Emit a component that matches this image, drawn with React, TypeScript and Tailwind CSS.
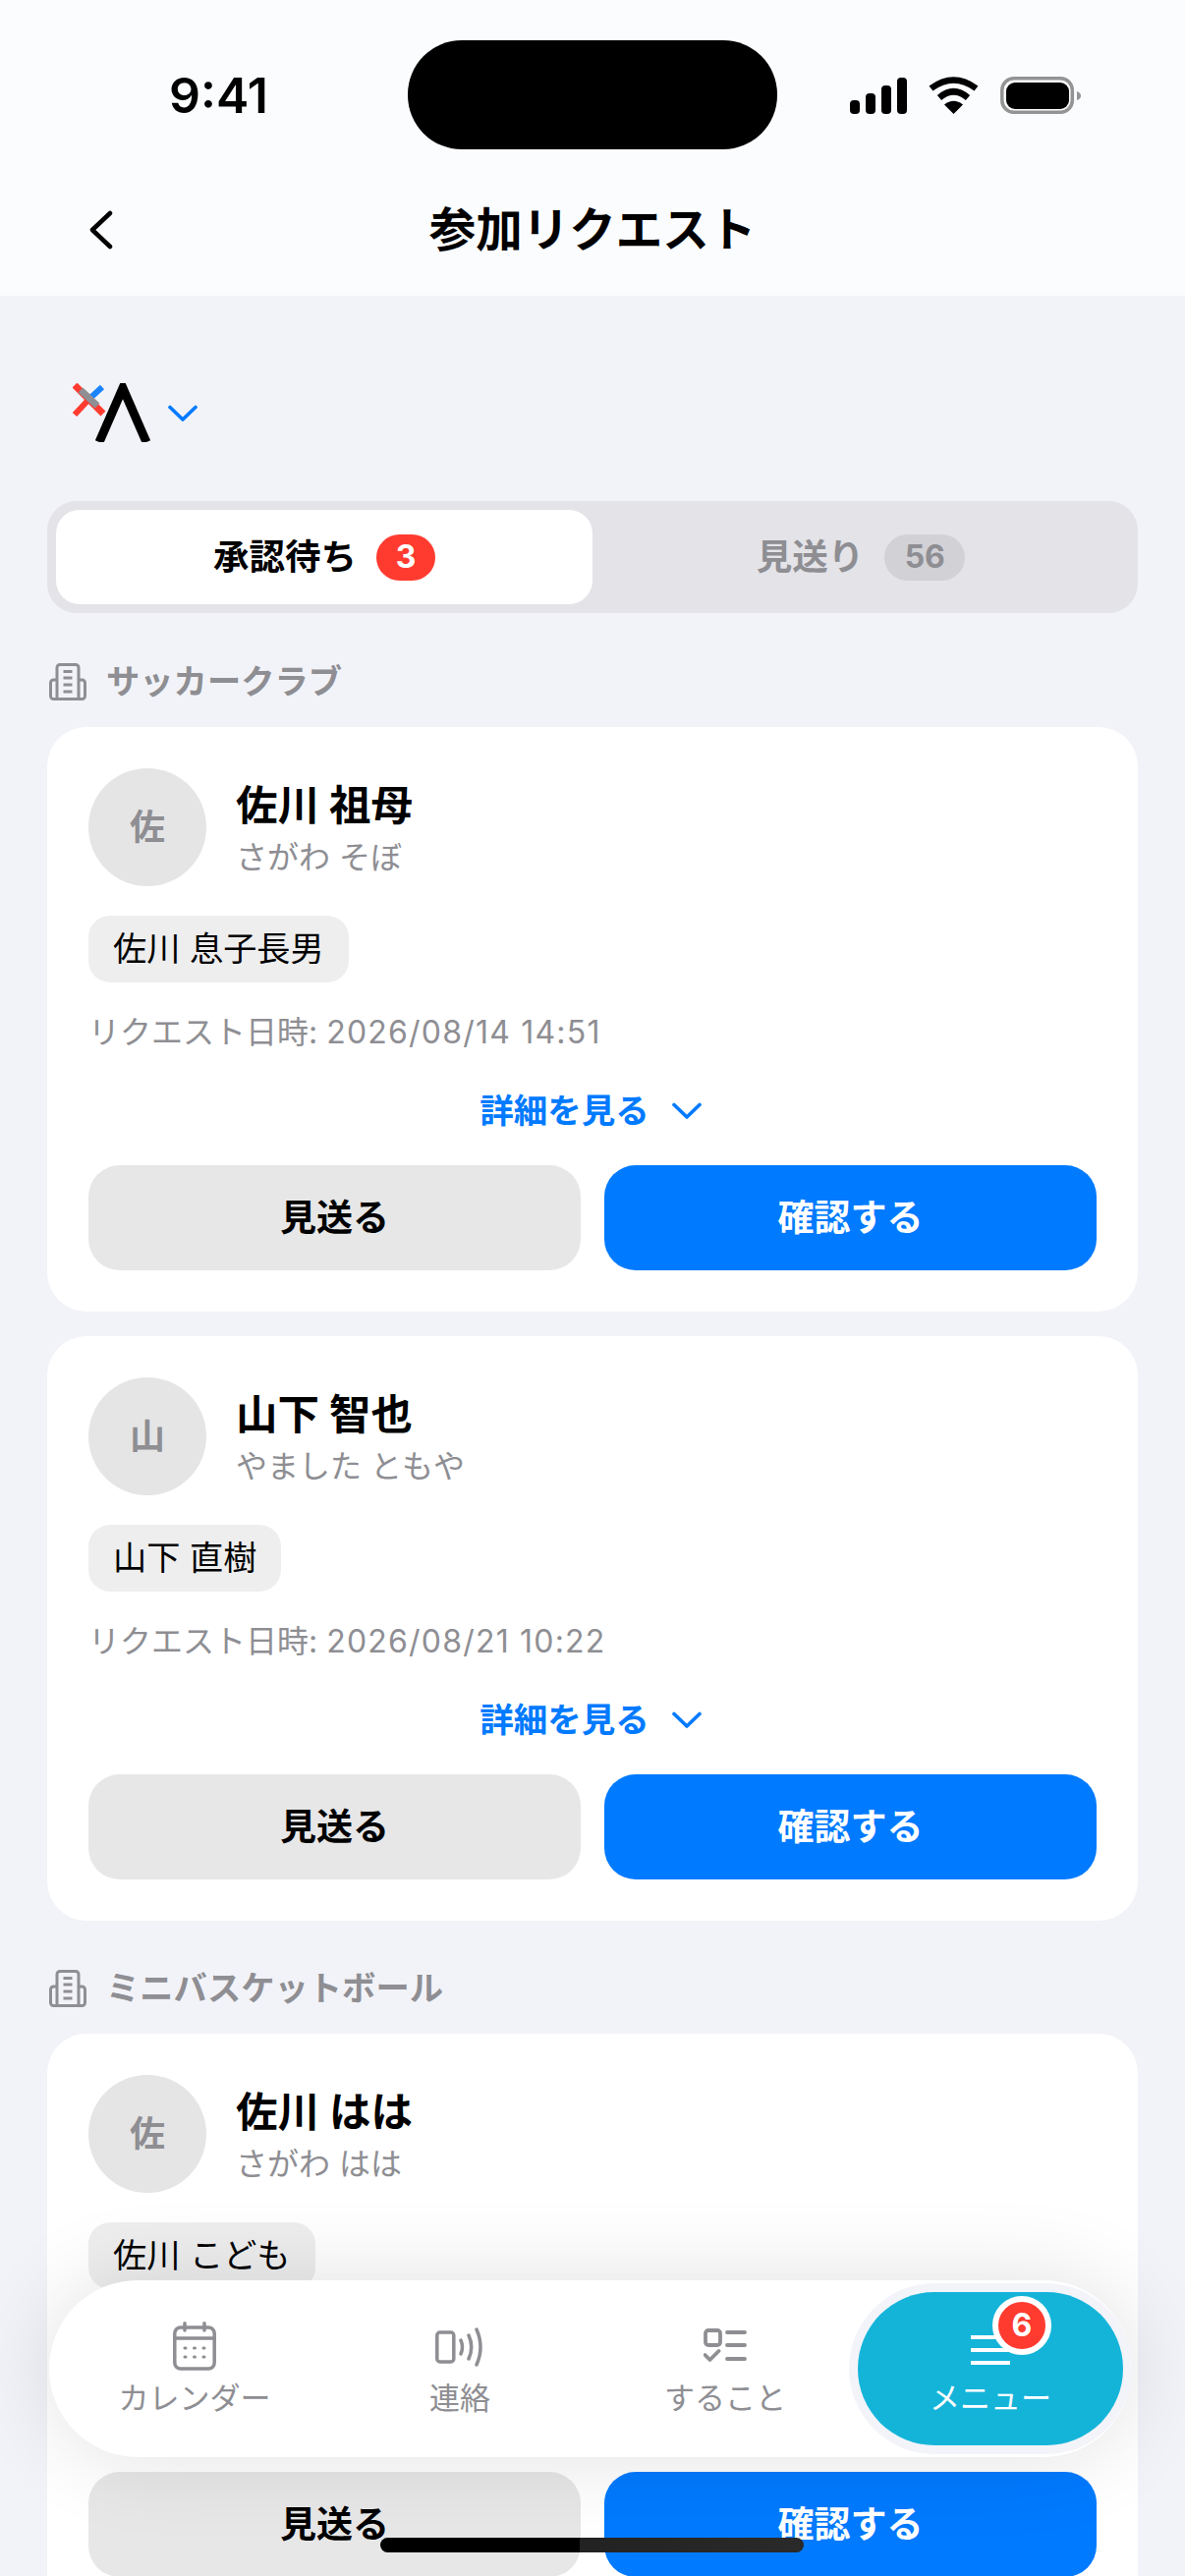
const FONT = "font-['Inter','Noto_Sans_CJK_JP',sans-serif]";

function Building() {
  return (
    <svg width="38" height="38" viewBox="0 0 38 38" fill="none" stroke="#8e8e93" strokeWidth="3" strokeLinejoin="round">
      <path d="M8 36.500V4.500a3 3 0 0 1 3-3h16a3 3 0 0 1 3 3v32" />
      <path d="M8 17H4.500a3 3 0 0 0-3 3v13.500a3 3 0 0 0 3 3h29a3 3 0 0 0 3-3V20a3 3 0 0 0-3-3H30" />
      <path d="M14.500 8.500h9M14.500 15h9M14.500 22h9M14.500 29h9" strokeWidth="3" />
    </svg>
  );
}

function Chevron({ cls = "" }: { cls?: string }) {
  return (
    <svg width="30" height="18" viewBox="0 0 30 18" fill="none" stroke="#007aff" strokeWidth="3.600" strokeLinecap="round" strokeLinejoin="round" className={cls}>
      <path d="M2 2.500 15 15 28 2.500" />
    </svg>
  );
}

function Card({ initial, name, kana, chip, date }: { initial: string; name: string; kana: string; chip: string; date: string }) {
  const [label, stamp] = date.split("|");
  return (
    <div className="bg-white rounded-[40px] p-[42px] h-[595px] shrink-0">
      <div className="flex items-start">
        <div className="w-[120px] h-[120px] rounded-full bg-[#e5e5e6] flex items-center justify-center text-[36px] font-bold text-[#8e8e93]">{initial}</div>
        <div className="ml-[30px] pt-[10px] flex flex-col">
          <div className="text-[42.500px] leading-[56px] font-bold text-black">{name}</div>
          <div className="text-[32px] leading-[44px] mt-[3px] text-[#8e8e93]">{kana}</div>
        </div>
      </div>
      <div className="mt-[30px] flex">
        <div className="h-[68px] px-[25px] rounded-[22px] bg-[#eeeeef] flex items-center text-[34.200px] text-black">{chip}</div>
      </div>
      <div className="mt-[31px] mb-[-1px] h-[40px] flex items-center text-[32px] text-[#8e8e93] whitespace-pre">
        <span>{label}</span>
        <span className="tracking-[1.200px]">{stamp}</span>
      </div>
      <div className="mt-[41px] h-[40px] flex items-center justify-center gap-[23px] text-[34.500px] font-bold text-[#007aff] -ml-[4px]">
        <span>詳細を見る</span>
        <Chevron />
      </div>
      <div className="mt-[35px] grid grid-cols-2 gap-[24px]">
        <div className="h-[107px] rounded-[32px] bg-[#e7e7e8] flex items-center justify-center text-[37px] font-bold text-black">見送る</div>
        <div className="h-[107px] rounded-[32px] bg-[#007aff] flex items-center justify-center text-[37px] font-bold text-white">確認する</div>
      </div>
    </div>
  );
}

function SectionHead({ label }: { label: string }) {
  return (
    <div className="h-[38px] flex items-center gap-[20px] mb-[27px] pl-[2px]">
      <Building />
      <span className="text-[34.300px] font-bold text-[#8e8e93]">{label}</span>
    </div>
  );
}

function TabItem({ label, icon }: { label: string; icon: React.ReactNode }) {
  return (
    <div className="w-[270px] h-[156px] shrink-0 flex flex-col items-center">
      <div className="h-[88px] flex items-end justify-center pb-[8px]">{icon}</div>
      <div className="text-[31px] leading-[40px] text-[#8e8e93] whitespace-nowrap">{label}</div>
    </div>
  );
}

export default function App() {
  return (
    <div className={`relative w-[1206px] h-[2622px] overflow-hidden bg-[#f2f3f8] ${FONT}`}>
      <header className="h-[301px] bg-[#fbfcfe]">
        <div className="h-[152px] pt-[41px] grid grid-cols-[1fr_376px_1fr]">
          <div className="pl-[172px] flex items-center text-[50px] leading-none font-semibold text-black">9:41</div>
          <div className="h-[111px] rounded-[55px] bg-black" />
          <div className="pr-[106px] flex items-center justify-end">
            <svg width="235" height="38" viewBox="0 0 235 38">
              <rect x="0" y="24" width="10" height="14" rx="4" />
              <rect x="16" y="17" width="10" height="21" rx="4" />
              <rect x="32" y="9" width="10" height="29" rx="4" />
              <rect x="48" y="1" width="10" height="37" rx="4" />
              <g transform="translate(80 1)">
                <path d="M2.500 11Q25.500 -6 48.500 11" fill="none" stroke="#000" strokeWidth="6.500" />
                <path d="M11 20.500Q25.500 8 40 20.500" fill="none" stroke="#000" strokeWidth="6.500" />
                <path d="M25.500 37 16 27.500Q25.500 20 35 27.500Z" />
              </g>
              <rect x="154.800" y="1.800" width="71.500" height="34.500" rx="12" fill="none" stroke="#949494" strokeWidth="3.500" />
              <rect x="159" y="6" width="64" height="27" rx="9" />
              <path d="M231 15v9q4-1.500 4-4.500t-4-4.500Z" fill="#949494" />
            </svg>
          </div>
        </div>
        <div className="h-[149px] pt-[15px] grid grid-cols-[1fr_auto_1fr] items-center">
          <div className="pl-[91px]">
            <svg width="24" height="40" viewBox="0 0 24 40" fill="none" stroke="#000" strokeWidth="4.500" strokeLinecap="round" strokeLinejoin="round">
              <path d="M21 3 3 20l18 17" />
            </svg>
          </div>
          <div className="text-[47.500px] leading-[60px] font-bold text-black">参加リクエスト</div>
          <div />
        </div>
      </header>

      <main className="px-[48px]">
        <div className="pt-[90px] pb-[60px] pl-[26px] flex items-start">
          <svg width="80" height="60" viewBox="0 0 80 60" fill="none" className="block -mt-[1px]">
            <path d="M2 32 16 17" stroke="#ff3b30" strokeWidth="6" />
            <path d="M18 15 30 4" stroke="#1a84ff" strokeWidth="6" />
            <path d="M2 2 31 31" stroke="#ff3b30" strokeWidth="7" />
            <path d="M8 7 25 23" stroke="#8e8e93" strokeWidth="7" />
            <path d="M27 60 51 5 75 60" stroke="#000" strokeWidth="9" strokeLinejoin="miter" />
          </svg>
          <Chevron cls="ml-[17px] mt-[21px]" />
        </div>

        <div className="h-[114px] p-[9px] rounded-[30px] bg-[#e3e3e8] grid grid-cols-2">
          <div className="rounded-[24px] bg-white flex items-center justify-center gap-[20px]">
            <span className="text-[36.500px] font-bold text-black">承認待ち</span>
            <span className="w-[60px] h-[47px] rounded-full bg-[#ff3b30] flex items-center justify-center text-[32px] font-bold text-white">3</span>
          </div>
          <div className="flex items-center justify-center gap-[21px]">
            <span className="text-[36.500px] font-bold text-[#8e8e93]">見送り</span>
            <span className="w-[82px] h-[47px] rounded-full bg-[#d1d1d6] flex items-center justify-center text-[32px] font-bold text-[#8e8e93]">56</span>
          </div>
        </div>

        <section className="mt-[51px]">
          <SectionHead label="サッカークラブ" />
          <div className="flex flex-col gap-[25px]">
            <Card initial="佐" name="佐川 祖母" kana="さがわ そぼ" chip="佐川 息子長男" date="リクエスト日時: |2026/08/14 14:51" />
            <Card initial="山" name="山下 智也" kana="やました ともや" chip="山下 直樹" date="リクエスト日時: |2026/08/21 10:22" />
          </div>
        </section>

        <section className="mt-[50px]">
          <SectionHead label="ミニバスケットボール" />
          <Card initial="佐" name="佐川 はは" kana="さがわ はは" chip="佐川 こども" date="リクエスト日時: |2026/08/14 14:51" />
        </section>
      </main>

      <nav className="absolute left-[50px] top-[2321px] w-[1102px] h-[180px] rounded-[90px] bg-white pl-[13px] pr-[9px] py-[12px] flex shadow-[0_0_90px_rgba(0,0,0,0.12)]">
        <TabItem
          label="カレンダー"
          icon={
            <svg width="44" height="50" viewBox="0 0 44 50" fill="none" stroke="#8e8e93" strokeWidth="3.500" strokeLinecap="round">
              <rect x="1.800" y="6" width="40.400" height="42" rx="6" />
              <path d="M1.800 17h40.400M12 1.800V9M32 1.800V9" />
              <path d="M12 27h1M21.500 27h1M31 27h1M12 36h1M21.500 36h1M31 36h1" strokeWidth="3" />
            </svg>
          }
        />
        <TabItem
          label="連絡"
          icon={
            <svg width="50" height="40" viewBox="0 0 50 40" fill="none" stroke="#8e8e93" strokeWidth="3.500" strokeLinecap="round" className="mb-[4px]">
              <rect x="1.800" y="5" width="17" height="30" rx="3" />
              <path d="M26 13q3 7 0 14M34 8q5.500 12 0 24M42 2q8 18 0 36" />
            </svg>
          }
        />
        <TabItem
          label="すること"
          icon={
            <svg width="44" height="37" viewBox="0 0 44 37" fill="none" stroke="#8e8e93" strokeWidth="3.800" strokeLinecap="round" strokeLinejoin="round" className="mb-[6px]">
              <rect x="2" y="2" width="15" height="15" rx="3" />
              <path d="M1.500 27l5 5 9-9M24 4h18M24 17h18M24 31h18" />
            </svg>
          }
        />
        <div className="relative w-[270px] h-[156px] shrink-0 rounded-[78px] bg-[#14b4d9] flex flex-col items-center ring-[9px] ring-[#f3f4f9]">
          <div className="h-[88px] flex items-end justify-center pb-[8px]">
            <svg width="40" height="30" viewBox="0 0 40 30" stroke="#fff" strokeWidth="4" className="mb-[6px]">
              <path d="M0 2h40M0 15h40M0 28h40" />
            </svg>
          </div>
          <div className="text-[31px] leading-[40px] text-white whitespace-nowrap">メニュー</div>
          <div className="absolute left-[137px] top-[4px] w-[60px] h-[60px] rounded-full bg-[#ff3b30] border-[6px] border-white flex items-center justify-center text-[32px] font-bold text-white">6</div>
        </div>
      </nav>

      <div className="absolute left-[387px] top-[2583px] w-[431px] h-[15px] rounded-full bg-[linear-gradient(90deg,#000_0%,#000_47%,#222_47%,#2a2a2a_100%)]" />
    </div>
  );
}
